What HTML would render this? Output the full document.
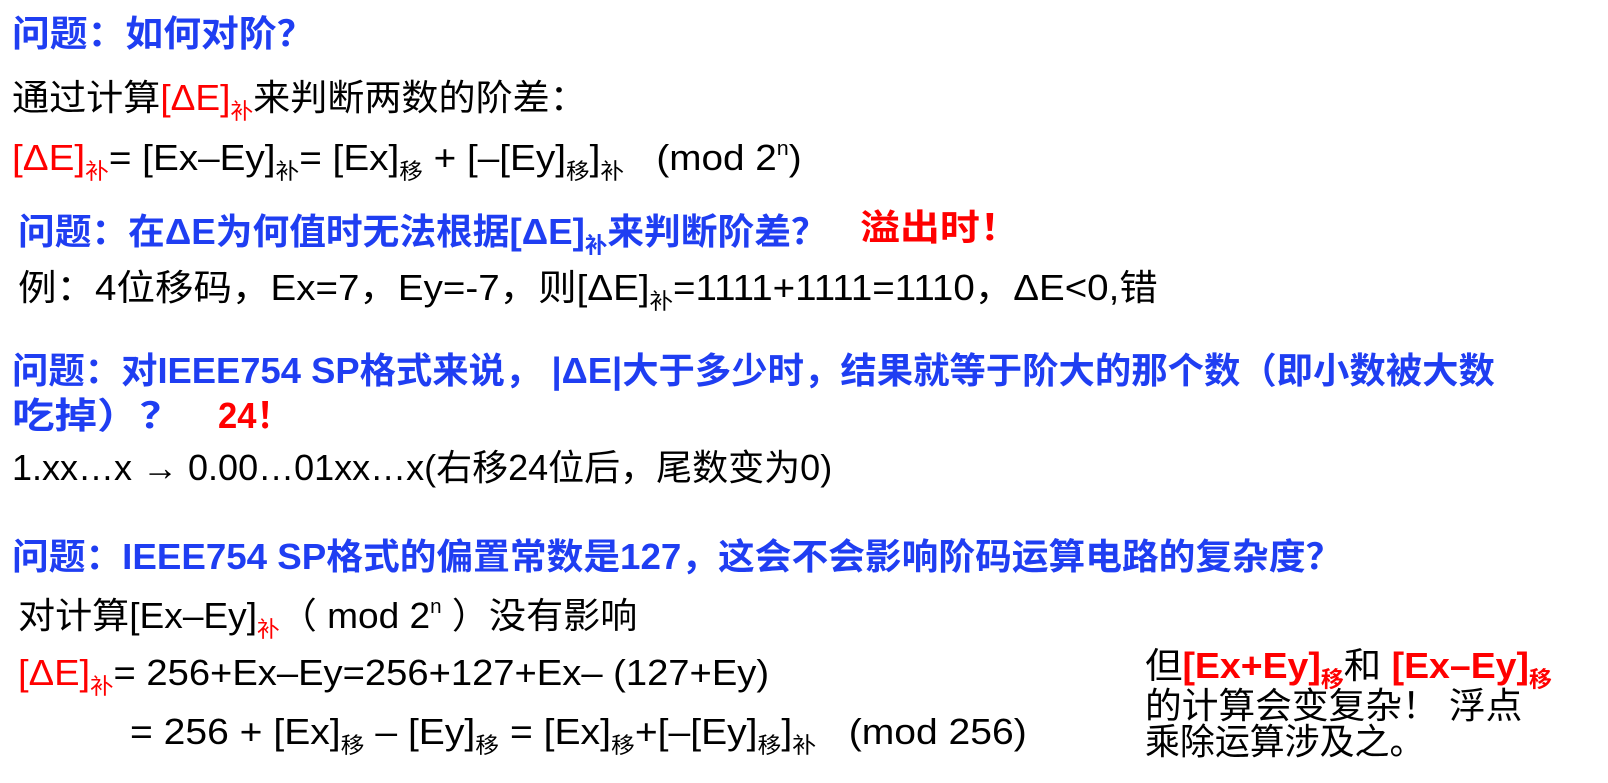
<!DOCTYPE html>
<html><head><meta charset="utf-8"><style>
body{margin:0;width:1608px;height:783px;background:#fff;overflow:hidden;position:relative;font-family:"Liberation Sans","Noto Sans CJK SC",sans-serif;color:#000}
.l{position:absolute;white-space:nowrap;line-height:1;font-size:36px;transform-origin:0 0}
.b{color:#1f3ef2;font-weight:bold;font-size:36px}
.r{color:#f00}
.rb{color:#f00;font-weight:bold}
sub{font-size:22px;vertical-align:-9px;line-height:0}
sup{font-size:20px;vertical-align:15px;line-height:0}
</style></head><body>
<div class="l b" style="left:12px;top:16px;transform:scaleX(1.05)">问题：如何对阶？</div>
<div class="l" style="left:12px;top:80px;transform:scaleX(1.03)">通过计算<span class="r">[ΔE]<sub>补</sub></span>来判断两数的阶差：</div>
<div class="l" style="left:12px;top:140px;transform:scaleX(1.075)"><span class="r">[ΔE]<sub>补</sub></span>= [Ex–Ey]<sub>补</sub>= [Ex]<sub>移</sub> + [–[Ey]<sub>移</sub>]<sub>补</sub> &nbsp;&nbsp;(mod 2<sup>n</sup>)</div>
<div class="l b" style="left:18px;top:214px;transform:scaleX(1.02)">问题：在ΔE为何值时无法根据[ΔE]<sub>补</sub>来判断阶差？</div>
<div class="l rb" style="left:860px;top:210px;transform:scaleX(1.11)">溢出时！</div>
<div class="l" style="left:18px;top:270px;transform:scaleX(1.07)">例：4位移码，Ex=7，Ey=-7，则[ΔE]<sub>补</sub>=1111+1111=1110，ΔE&lt;0,错</div>
<div class="l b" style="left:12px;top:353px;transform:scaleX(1.01)">问题：对IEEE754 SP格式来说， |ΔE|大于多少时，结果就等于阶大的那个数（即小数被大数</div>
<div class="l b" style="left:12px;top:398px;transform:scaleX(1.18)">吃掉）？</div>
<div class="l rb" style="left:218px;top:398px;transform:scaleX(0.96)">24！</div>
<div class="l" style="left:12px;top:450px;transform:scaleX(1.0)">1.xx…x → 0.00…01xx…x(右移24位后，尾数变为0)</div>
<div class="l b" style="left:12px;top:539px;transform:scaleX(1.02)">问题：IEEE754 SP格式的偏置常数是127，这会不会影响阶码运算电路的复杂度？</div>
<div class="l" style="left:18px;top:598px;transform:scaleX(1.03)">对计算[Ex–Ey]<sub class="r">补</sub>（ mod 2<sup>n</sup> ）没有影响</div>
<div class="l" style="left:18px;top:655px;transform:scaleX(1.06)"><span class="r">[ΔE]<sub>补</sub></span>= 256+Ex–Ey=256+127+Ex– (127+Ey)</div>
<div class="l" style="left:130px;top:714px;transform:scaleX(1.085)">= 256 + [Ex]<sub>移</sub> – [Ey]<sub>移</sub> = [Ex]<sub>移</sub>+[–[Ey]<sub>移</sub>]<sub>补</sub> &nbsp;&nbsp;(mod 256)</div>
<div class="l" style="left:1145px;top:648px;transform:scaleX(1.04)">但<span class="rb">[Ex+Ey]<sub>移</sub></span>和 <span class="rb">[Ex–Ey]<sub>移</sub></span></div>
<div class="l" style="left:1145px;top:688px;transform:scaleX(1.02)">的计算会变复杂！ 浮点</div>
<div class="l" style="left:1145px;top:724px;transform:scaleX(0.97)">乘除运算涉及之。</div>
</body></html>
